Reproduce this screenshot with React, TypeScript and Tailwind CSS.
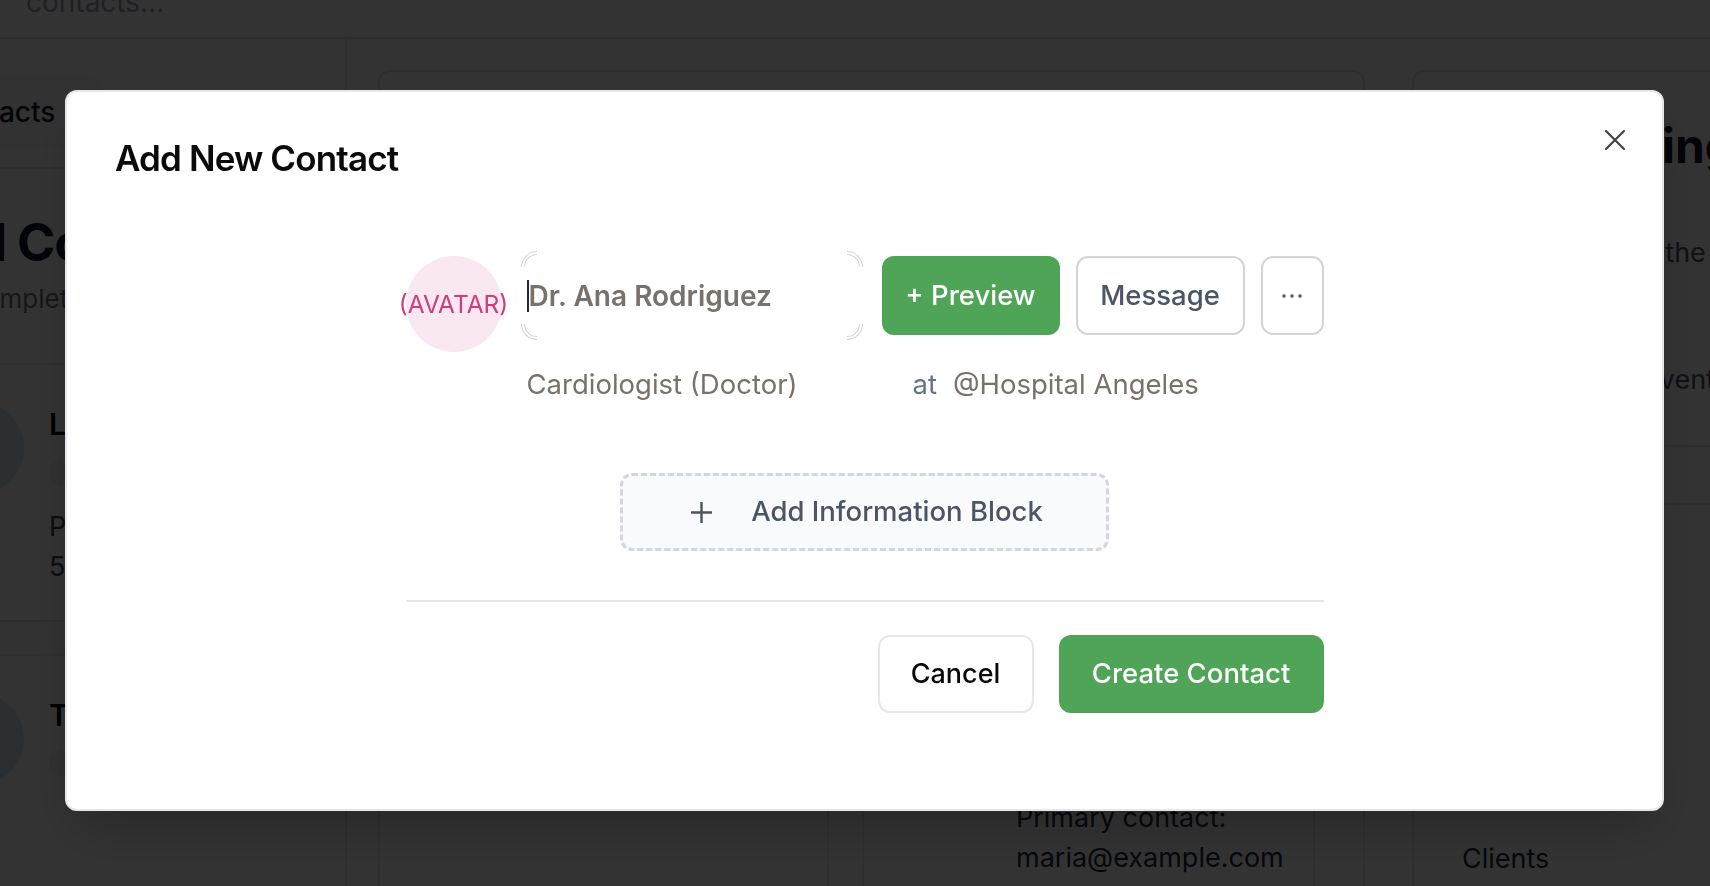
import React from "react";

function CornerMarks() {
  // faint double arcs drawn at the four corners of the focused name field
  return (
    <>
      <span className="pointer-events-none absolute -left-[5px] -top-[5px] h-[16px] w-[16px] rounded-tl-[16px] border-l border-t border-gray-300" />
      <span className="pointer-events-none absolute -left-[2px] -top-[2px] h-[13px] w-[13px] rounded-tl-[13px] border-l border-t border-gray-300" />
      <span className="pointer-events-none absolute -right-[5px] -top-[5px] h-[16px] w-[16px] rounded-tr-[16px] border-r border-t border-gray-300" />
      <span className="pointer-events-none absolute -right-[2px] -top-[2px] h-[13px] w-[13px] rounded-tr-[13px] border-r border-t border-gray-300" />
      <span className="pointer-events-none absolute -bottom-[5px] -left-[5px] h-[16px] w-[16px] rounded-bl-[16px] border-b border-l border-gray-300" />
      <span className="pointer-events-none absolute -bottom-[2px] -left-[2px] h-[13px] w-[13px] rounded-bl-[13px] border-b border-l border-gray-300" />
      <span className="pointer-events-none absolute -bottom-[5px] -right-[5px] h-[16px] w-[16px] rounded-br-[16px] border-b border-r border-gray-300" />
      <span className="pointer-events-none absolute -bottom-[2px] -right-[2px] h-[13px] w-[13px] rounded-br-[13px] border-b border-r border-gray-300" />
    </>
  );
}

function ContactCard({ name, lines }: { name: string; lines: string[] }) {
  return (
    <div className="flex items-start pt-[37px]">
      <div className="-ml-[68px] h-[92px] w-[92px] shrink-0 rounded-full bg-[#d4e8f5]" />
      <div className="ml-[25px] min-w-0">
        <p className="whitespace-nowrap text-[30px] font-semibold leading-[45px] text-black">{name}</p>
        <div className="mt-[12px] h-[27px] w-[96px] rounded-full bg-gray-100" />
        <div className="mt-[21px]">
          {lines.map((l) => (
            <p key={l} className="whitespace-nowrap text-[27px] leading-[40px] text-gray-700">
              {l}
            </p>
          ))}
        </div>
      </div>
    </div>
  );
}

function BackgroundPage() {
  return (
    <div className="h-[886px] w-[1710px] bg-white text-gray-900">
      <div className="h-[39px] overflow-hidden border-b-2 border-gray-200">
        <p className="-mt-[12px] pl-[26px] text-[28px] leading-none text-gray-400">contacts...</p>
      </div>
      <div className="flex h-[847px]">
        <aside className="w-[347px] shrink-0 overflow-hidden border-r-2 border-gray-200">
          <div className="flex h-[130px] items-center border-b-2 border-gray-200 pt-[18px]">
            <div className="-ml-[91px] rounded-[12px] border-2 border-gray-100 bg-gray-50 py-[12px] pl-[24px] pr-[44px] text-[28px] font-medium">
              Contacts
            </div>
          </div>
          <div className="h-[196px] border-b-2 border-gray-200 pt-[48px]">
            <h1 className="-ml-[57px] whitespace-nowrap text-[52px] font-bold leading-none tracking-tight">All Contacts</h1>
            <p className="-ml-[35px] mt-[10px] whitespace-nowrap text-[26px] leading-[39px] text-gray-500">
              Complete list of contacts
            </p>
          </div>
          <div className="h-[257px] border-b-2 border-gray-200">
            <ContactCard name="Laura Martinez" lines={["Phone:", "555-0142"]} />
          </div>
          <div className="h-[32px] bg-gray-50" />
          <div className="border-t-2 border-gray-200">
            <ContactCard name="Tomás Herrera" lines={[]} />
          </div>
        </aside>

        <main className="w-[1065px] shrink-0 pl-[31px] pt-[31px]">
          <div className="h-[900px] w-[987px] rounded-t-[12px] border-2 border-b-0 border-gray-200 pt-[560px]">
            <div className="flex h-[400px]">
              <div className="w-[449px] border-r-2 border-gray-200" />
              <div className="ml-[33px] w-[453px] border-x-2 border-gray-200 pl-[152px] pt-[166px]">
                <p className="whitespace-nowrap text-[27px] leading-[40px] text-gray-800">Primary contact:</p>
                <p className="whitespace-nowrap text-[27px] leading-[40px] text-gray-800">maria@example.com</p>
              </div>
            </div>
          </div>
        </main>

        <section className="flex-1 pt-[31px]">
          <div className="h-[900px] rounded-tl-[12px] border-l-2 border-t-2 border-gray-200 pt-[50px]">
            <h2 className="ml-[81px] whitespace-nowrap text-[48px] font-bold leading-none">Upcoming</h2>
            <p className="ml-[65px] mt-[63px] whitespace-nowrap text-[27px] leading-[40px] text-gray-600">
              Reminders for the week
            </p>
            <p className="ml-[52px] mt-[87px] whitespace-nowrap text-[27px] leading-[40px] text-gray-600">
              No upcoming events
            </p>
            <div className="mt-[45px] h-[60px] border-y-2 border-gray-200" />
            <p className="ml-[48px] mt-[334px] text-[27px] leading-[40px] text-gray-800">Clients</p>
          </div>
        </section>
      </div>
    </div>
  );
}

function ContactDialog() {
  return (
    <div className="fixed left-[65px] top-[90px] h-[721px] w-[1599px] rounded-[12px] border-2 border-gray-200 bg-white px-[48px] pt-[49px] shadow-2xl">
      <button className="absolute right-[36px] top-[37px] text-[#444]" aria-label="Close">
        <svg width="22" height="22" viewBox="0 0 22 22" fill="none" stroke="currentColor" strokeWidth="2.2" strokeLinecap="round">
          <path d="M2 2L20 20M20 2L2 20" />
        </svg>
      </button>

      <h2 className="text-[35px] font-semibold leading-none tracking-tight text-[#0a0a0a]">Add New Contact</h2>

      <div className="mx-auto mt-[80px] w-[918px]">
        <div className="flex items-start">
          <div className="flex h-[96px] w-[96px] shrink-0 items-center justify-center rounded-full bg-[#f9e7f1]">
            <span className="whitespace-nowrap text-[24.5px] text-[#d23a7b]">(AVATAR)</span>
          </div>

          <div className="relative ml-[24px] mr-[24px] flex h-[79px] flex-1 items-center pl-[1px]">
            <CornerMarks />
            <span className="h-[32px] w-[2px] bg-[#1e293b]" />
            <span className="whitespace-nowrap text-[28px] font-semibold text-[#78716c]">Dr. Ana Rodriguez</span>
          </div>

          <div className="flex gap-[16px]">
            <button className="h-[79px] w-[178px] rounded-[12px] bg-[#4fa458] text-[27.5px] font-medium text-white">
              + Preview
            </button>
            <button className="h-[79px] w-[169px] rounded-[12px] border-2 border-[#d1d5db] bg-white text-[27.5px] font-medium text-[#4b5563]">
              Message
            </button>
            <button className="flex h-[79px] w-[63px] items-center justify-center rounded-[12px] border-2 border-[#d1d5db] bg-white text-[#4b5563]">
              <svg width="22" height="6" viewBox="0 0 22 6" fill="currentColor">
                <circle cx="3" cy="3" r="1.7" />
                <circle cx="11" cy="3" r="1.7" />
                <circle cx="19" cy="3" r="1.7" />
              </svg>
            </button>
          </div>
        </div>

        <div className="ml-[120px] mt-[13px] flex items-center gap-[16px] text-[27.5px] leading-[39px]">
          <span className="w-[371px] whitespace-nowrap pl-[1px] text-[#78716c]">Cardiologist (Doctor)</span>
          <span className="text-[#64748b]">at</span>
          <span className="whitespace-nowrap text-[#78716c]">@Hospital Angeles</span>
        </div>

        <button className="mx-auto mt-[69px] flex h-[78px] w-[489px] items-center justify-center gap-[38px] rounded-[12px] border-[3px] border-dashed border-[#d4d6dc] bg-[#f8fafc] pl-[4px] text-[27.5px] font-medium text-[#4b5563]">
          <svg width="23" height="23" viewBox="0 0 23 23" fill="none" stroke="currentColor" strokeWidth="2.4">
            <path d="M11.5 1V22M1 11.5H22" />
          </svg>
          Add Information Block
        </button>

        <div className="mt-[49px] h-[2px] bg-[#e5e7eb]" />

        <div className="mt-[33px] flex justify-end gap-[25px]">
          <button className="h-[78px] w-[156px] rounded-[12px] border-2 border-[#e5e7eb] bg-white text-[27px] font-medium text-[#0a0a0a]">
            Cancel
          </button>
          <button className="h-[78px] w-[265px] rounded-[12px] bg-[#4fa458] text-[27.5px] font-medium text-white">
            Create Contact
          </button>
        </div>
      </div>
    </div>
  );
}

export default function App() {
  return (
    <div className="relative h-[886px] w-[1710px] overflow-hidden font-[Inter,sans-serif]">
      <BackgroundPage />
      <div className="fixed inset-0 bg-black/80" />
      <ContactDialog />
    </div>
  );
}
